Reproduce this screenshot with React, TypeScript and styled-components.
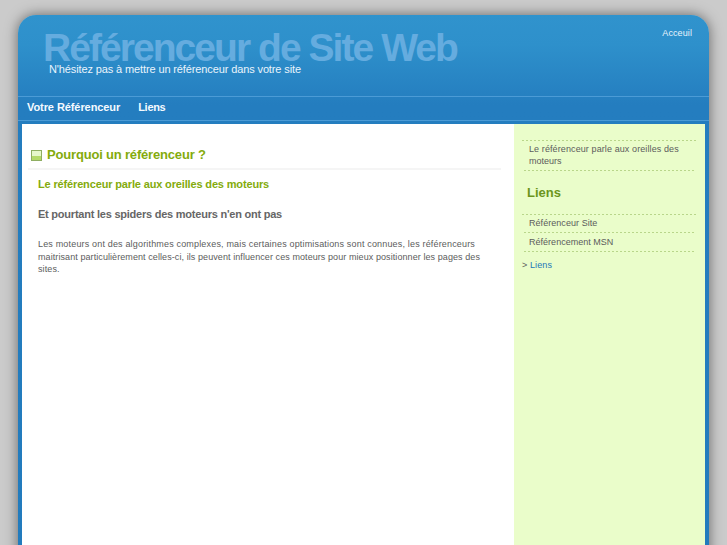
import React from 'react'
import styled, { createGlobalStyle } from 'styled-components'

const GlobalStyle = createGlobalStyle`
  * {
    box-sizing: border-box;
    margin: 0;
    padding: 0;
  }
  body {
    height: 545px;
    overflow: hidden;
    background: #cbcbcb;
    font-family: 'Liberation Sans', Arial, Helvetica, sans-serif;
    font-size: 9px;
    color: #5c5c5c;
  }
  a {
    color: inherit;
    text-decoration: none;
  }
`

const Page = styled.div`
  height: 545px;
  padding: 15px 18px 0;
  overflow: hidden;
`

const Wrapper = styled.div`
  display: flex;
  flex-direction: column;
  height: 560px;
  border-radius: 18px 18px 0 0;
  background: linear-gradient(#3093cd 0, #2e90cb 30px, #247dbf 90px, #227bbd 100%);
  box-shadow: 0 0 13px 0 rgba(0, 0, 0, 0.5);
`

const Header = styled.header`
  display: flex;
  justify-content: space-between;
  height: 81px;
  padding: 12px 17px 0 25px;
`

const SiteTitle = styled.h1`
  height: 35px;
  font-size: 39px;
  line-height: 42px;
  letter-spacing: -1.95px;
  white-space: nowrap;
  color: #65acdf;
`

const Tagline = styled.p`
  padding-left: 6px;
  font-size: 11px;
  line-height: 14px;
  letter-spacing: -0.12px;
  white-space: nowrap;
  color: #e9f4fc;
`

const TopLink = styled.a`
  font-size: 9px;
  line-height: 12px;
  letter-spacing: 0.1px;
  color: #e9f4fc;
`

const Nav = styled.nav`
  display: flex;
  gap: 18px;
  height: 25px;
  padding-left: 9px;
  border-top: 1px solid #4b9bd6;
  border-bottom: 1px solid #4b9bd6;
`

const NavLink = styled.a<{ $spacing: number }>`
  font-size: 11px;
  font-weight: bold;
  line-height: 21px;
  letter-spacing: ${(p) => p.$spacing}px;
  color: #f4faff;
`

const Body = styled.div`
  flex: 1;
  display: flex;
  margin: 3px 4px 0;
`

const Main = styled.main`
  width: 492px;
  padding: 22px 13px 0 6px;
  background: white;
`

const Heading = styled.div`
  display: flex;
  align-items: flex-end;
  gap: 5px;
  height: 24px;
  padding: 0 0 7px 3px;
  border-bottom: 2px solid #f5f5f5;
`

const Title = styled.h2`
  font-size: 13px;
  line-height: 12px;
  letter-spacing: -0.18px;
  color: #84ab0c;
`

const Article = styled.div`
  padding: 7px 0 0 10px;
`

const Subtitle = styled.h3<{ $color: string; $spacing: number }>`
  margin-bottom: 16px;
  font-size: 11px;
  line-height: 14px;
  letter-spacing: ${(p) => p.$spacing}px;
  color: ${(p) => p.$color};
`

const Text = styled.p`
  padding-top: 1px;
`

const Line = styled.span<{ $spacing: number }>`
  display: block;
  font-size: 9px;
  line-height: 12.5px;
  letter-spacing: ${(p) => p.$spacing}px;
  white-space: nowrap;
`

const Sidebar = styled.aside`
  width: 191px;
  padding: 16px 8px 0;
  background: #eafdca;
`

const Menu = styled.ul`
  list-style: none;
`

const Rule = styled.li<{ $inset?: boolean }>`
  height: 1px;
  margin: 0 ${(p) => (p.$inset ? '2px' : '0')};
  background: repeating-linear-gradient(
    90deg,
    #b9d68a 0 2px,
    transparent 2px 4px
  );
`

const Item = styled.li<{ $top: number; $height: number }>`
  height: ${(p) => p.$height}px;
  padding: ${(p) => p.$top}px 0 0 7px;
`

const SideTitle = styled.h2`
  padding: 13px 0 12px 5px;
  font-size: 13px;
  line-height: 18px;
  letter-spacing: 0;
  color: #6c951c;
`

const More = styled.p`
  padding-top: 7px;
  font-size: 9px;
  line-height: 13px;
  letter-spacing: 0.1px;
  a {
    color: #2478b8;
  }
`

const Bullet = () => (
  <svg width="11" height="11" viewBox="0 0 11 11" shapeRendering="crispEdges">
    <rect width="11" height="11" fill="#8fae62" />
    <rect x="1" y="1" width="9" height="5" fill="#e6f7cb" />
    <rect x="1" y="6" width="9" height="4" fill="#b4da6a" />
  </svg>
)

const App = () => (
  <>
    <GlobalStyle />
    <Page>
      <Wrapper>
        <Header>
          <div>
            <SiteTitle>Référenceur de Site Web</SiteTitle>
            <Tagline>N'hésitez pas à mettre un référenceur dans votre site</Tagline>
          </div>
          <TopLink href="#">Acceuil</TopLink>
        </Header>
        <Nav>
          <NavLink href="#" $spacing={-0.08}>
            Votre Référenceur
          </NavLink>
          <NavLink href="#" $spacing={-0.3}>
            Liens
          </NavLink>
        </Nav>
        <Body>
          <Main>
            <Heading>
              <Bullet />
              <Title>Pourquoi un référenceur ?</Title>
            </Heading>
            <Article>
              <Subtitle $color="#84ab0c" $spacing={-0.15}>
                Le référenceur parle aux oreilles des moteurs
              </Subtitle>
              <Subtitle $color="#666" $spacing={-0.23}>
                Et pourtant les spiders des moteurs n'en ont pas
              </Subtitle>
              <Text>
                <Line $spacing={0.17}>
                  Les moteurs ont des algorithmes complexes, mais certaines
                  optimisations sont connues, les référenceurs
                </Line>
                <Line $spacing={0.08}>
                  maitrisant particulièrement celles-ci, ils peuvent influencer
                  ces moteurs pour mieux positionner les pages des
                </Line>
                <Line $spacing={0.1}>sites.</Line>
              </Text>
            </Article>
          </Main>
          <Sidebar>
            <Menu>
              <Rule />
              <Item $top={1.5} $height={29}>
                <Line $spacing={0.1}>Le référenceur parle aux oreilles des</Line>
                <Line $spacing={0}>moteurs</Line>
              </Item>
              <Rule $inset />
            </Menu>
            <SideTitle>Liens</SideTitle>
            <Menu>
              <Rule />
              <Item $top={1.5} $height={17}>
                <Line $spacing={0.05}>Référenceur Site</Line>
              </Item>
              <Rule $inset />
              <Item $top={3} $height={18}>
                <Line $spacing={0.02}>Référencement MSN</Line>
              </Item>
              <Rule $inset />
            </Menu>
            <More>
              &gt; <a href="#">Liens</a>
            </More>
          </Sidebar>
        </Body>
      </Wrapper>
    </Page>
  </>
)

export default App
